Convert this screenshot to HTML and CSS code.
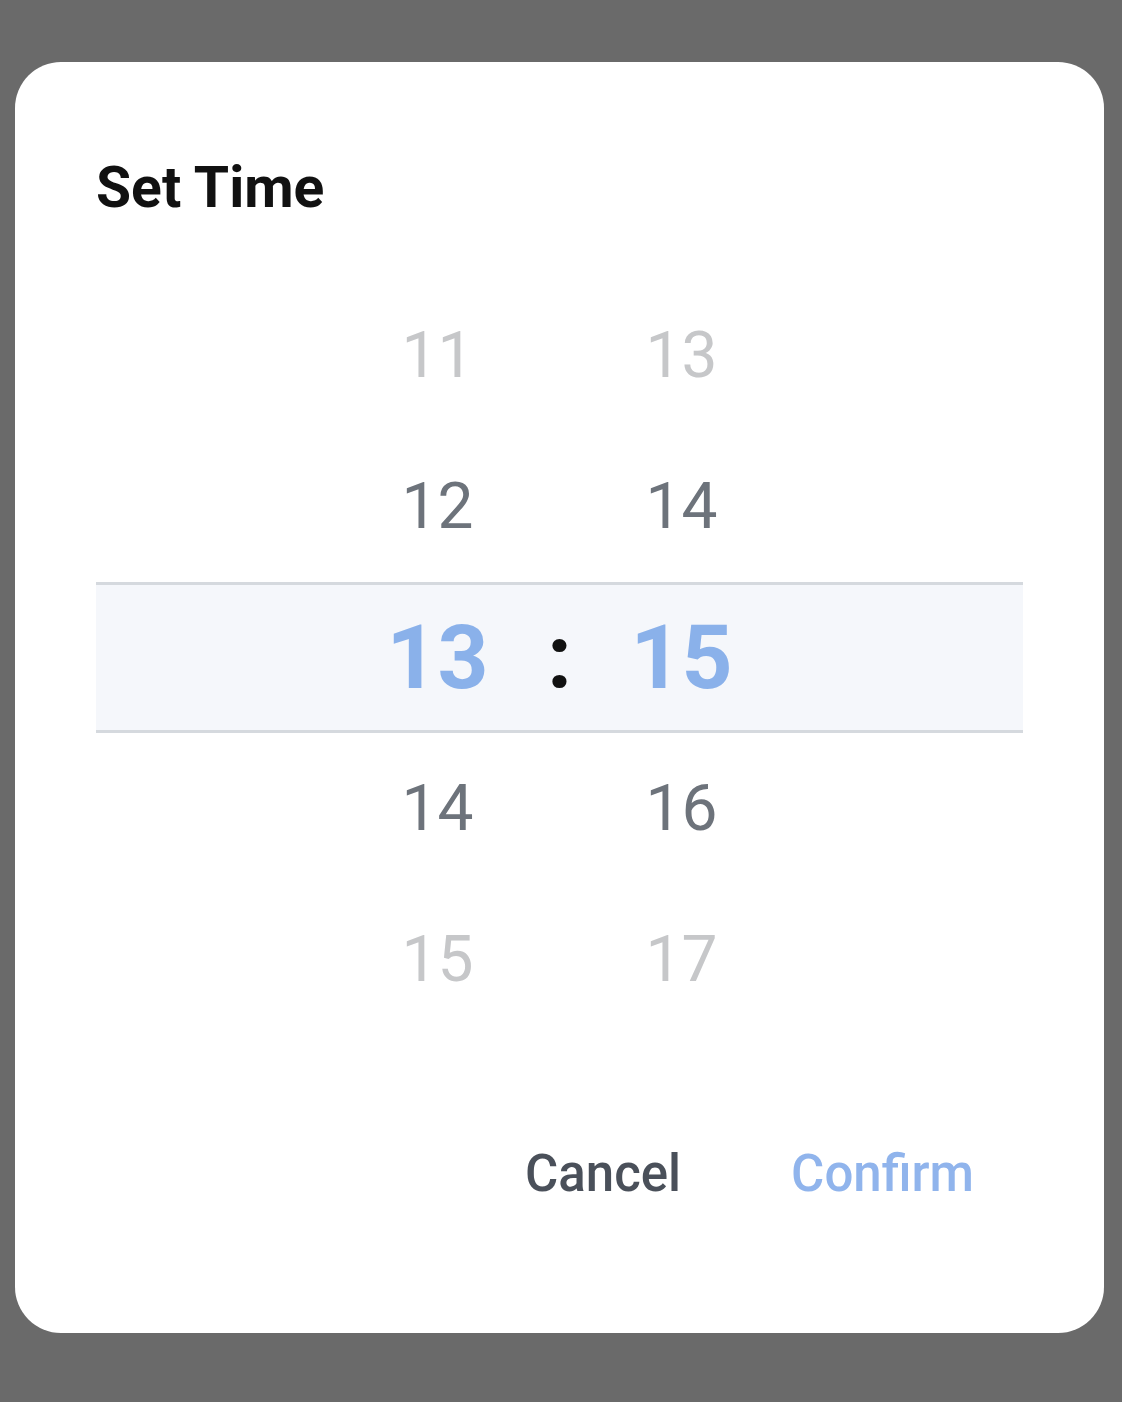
FILE: index.html
```html
<!DOCTYPE html>
<html lang="en">
<head>
<meta charset="UTF-8">
<meta name="viewport" content="width=device-width, initial-scale=1.0">
<title>Set Time</title>
<link rel="stylesheet" href="styles.css">
</head>
<body>
  <div class="dialog">
    <h2 class="dialog-title">Set Time</h2>

    <div class="picker">
      <div class="picker-row far">
        <span>11</span><span></span><span>13</span>
      </div>
      <div class="picker-row near">
        <span>12</span><span></span><span>14</span>
      </div>
      <div class="picker-row selected">
        <span>13</span><span class="sep">:</span><span>15</span>
      </div>
      <div class="picker-row near">
        <span>14</span><span></span><span>16</span>
      </div>
      <div class="picker-row far">
        <span>15</span><span></span><span>17</span>
      </div>
    </div>

    <div class="dialog-actions">
      <button class="btn cancel-btn">Cancel</button>
      <button class="btn confirm-btn">Confirm</button>
    </div>
  </div>
</body>
</html>
```

FILE: styles.css
```css
body {
  font-family: Roboto, "Liberation Sans", sans-serif;
  background-color: #6a6a6a;
  margin: 0;
  padding: 0;
}
.dialog {
  background-color: #fff;
  width: 1089px;
  margin: 62px 0 0 15px;
  padding: 97px 81px 134px;
  border-radius: 46px;
  box-sizing: border-box;
}
.dialog-title {
  margin: 0;
  font-size: 57px;
  line-height: 1;
  font-weight: 700;
  color: #111;
}
.picker {
  margin-top: 64px;
}
.picker-row {
  display: grid;
  grid-template-columns: 200px 44px 200px;
  justify-content: center;
  align-items: center;
  height: 151px;
  text-align: center;
  font-size: 64px;
  line-height: 1;
  box-sizing: border-box;
}
.picker-row.far {
  color: #c6c7c9;
}
.picker-row.near {
  color: #6d737b;
}
.picker-row.selected {
  background-color: #f5f7fb;
  border-top: 3px solid #d5d9de;
  border-bottom: 3px solid #d5d9de;
  font-size: 89px;
  font-weight: 700;
  color: #8ab1ea;
}
.picker-row .sep {
  color: #111;
}
.dialog-actions {
  display: flex;
  justify-content: flex-end;
  gap: 110px;
  margin-top: 113px;
  padding-right: 49px;
}
.btn {
  background: none;
  border: none;
  padding: 0;
  font-family: inherit;
  font-size: 51px;
  line-height: 1;
  font-weight: 500;
  cursor: pointer;
}
.cancel-btn {
  color: #4a505a;
}
.confirm-btn {
  color: #90b4ec;
}
```
